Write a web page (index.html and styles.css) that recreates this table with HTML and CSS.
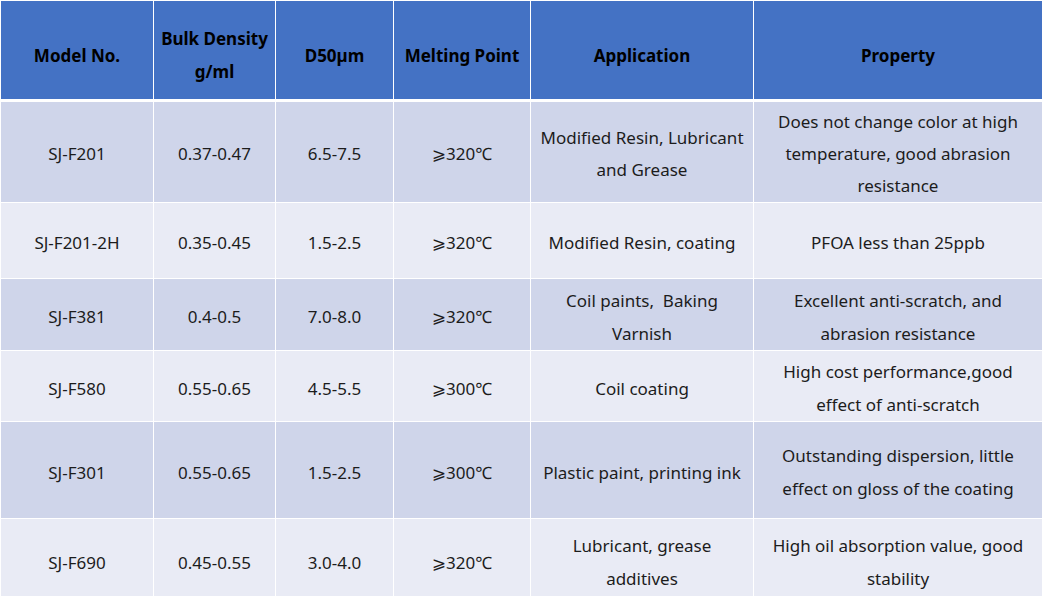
FILE: index.html
```html
<!DOCTYPE html>
<html lang="en">
<head>
<meta charset="utf-8">
<title>Products</title>
<link rel="stylesheet" href="styles.css">
</head>
<body>
<table class="spec">
  <colgroup>
    <col class="c1"><col class="c2"><col class="c3"><col class="c4"><col class="c5"><col class="c6">
  </colgroup>
  <thead>
    <tr>
      <th>Model No.</th>
      <th>Bulk Density<br>g/ml</th>
      <th>D50µm</th>
      <th>Melting Point</th>
      <th>Application</th>
      <th>Property</th>
    </tr>
  </thead>
  <tbody>
    <tr class="r1 odd">
      <td>SJ-F201</td><td>0.37-0.47</td><td>6.5-7.5</td><td>⩾320℃</td>
      <td>Modified Resin, Lubricant<br>and Grease</td>
      <td>Does not change color at high<br>temperature, good abrasion<br>resistance</td>
    </tr>
    <tr class="r2 even">
      <td>SJ-F201-2H</td><td>0.35-0.45</td><td>1.5-2.5</td><td>⩾320℃</td>
      <td>Modified Resin, coating</td>
      <td>PFOA less than 25ppb</td>
    </tr>
    <tr class="r3 odd">
      <td>SJ-F381</td><td>0.4-0.5</td><td>7.0-8.0</td><td>⩾320℃</td>
      <td>Coil paints,&nbsp; Baking<br>Varnish</td>
      <td>Excellent anti-scratch, and<br>abrasion resistance</td>
    </tr>
    <tr class="r4 even">
      <td>SJ-F580</td><td>0.55-0.65</td><td>4.5-5.5</td><td>⩾300℃</td>
      <td>Coil coating</td>
      <td>High cost performance,good<br>effect of anti-scratch</td>
    </tr>
    <tr class="r5 odd">
      <td>SJ-F301</td><td>0.55-0.65</td><td>1.5-2.5</td><td>⩾300℃</td>
      <td>Plastic paint, printing ink</td>
      <td>Outstanding dispersion, little<br>effect on gloss of the coating</td>
    </tr>
    <tr class="r6 even">
      <td>SJ-F690</td><td>0.45-0.55</td><td>3.0-4.0</td><td>⩾320℃</td>
      <td>Lubricant, grease<br>additives</td>
      <td>High oil absorption value, good<br>stability</td>
    </tr>
  </tbody>
</table>
</body>
</html>
```

FILE: styles.css
```css
html, body {
  margin: 0;
  padding: 0;
  background: #ffffff;
  overflow: hidden;
}

.spec {
  width: 1043px;
  table-layout: fixed;
  border-collapse: separate;
  border-spacing: 1px;
  background: #ffffff;
  font-family: "Noto Sans", "Open Sans", "DejaVu Sans", sans-serif;
  font-size: 17px;
  color: #1c1c1c;
}

.c1 { width: 152px; }
.c2 { width: 121px; }
.c3 { width: 117px; }
.c4 { width: 136px; }
.c5 { width: 222px; }
.c6 { width: 288px; }

.spec th,
.spec td {
  padding: 4px 2px 0;
  text-align: center;
  vertical-align: middle;
  line-height: 33px;
  box-sizing: border-box;
}

.spec th {
  background: #4472c4;
  color: #000000;
  font-weight: 700;
  height: 100px;
  padding-top: 10px;
  border-bottom: 2px solid #ffffff;
}

.odd td { background: #cfd5ea; }
.even td { background: #e9ebf5; }

.r1 td { height: 100px; line-height: 32px; }
.r2 td { height: 75px; }
.r3 td { height: 71px; }
.r4 td { height: 70px; }
.r5 td { height: 96px; }
.r6 td { height: 82px; }
```
